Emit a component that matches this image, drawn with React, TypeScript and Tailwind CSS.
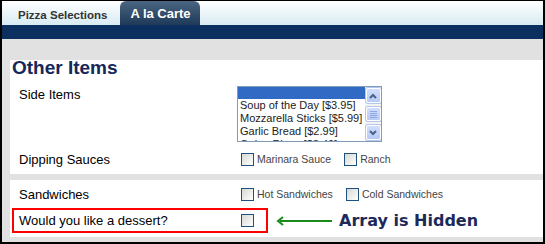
import React from "react"

const sides = ["Soup of the Day [$3.95]", "Mozzarella Sticks [$5.99]", "Garlic Bread [$2.99]", "Onion Rings [$3.49]"]

function Check() {
  return (
    <span className="inline-block w-[13px] h-[13px] shrink-0 border border-[#1c5180] bg-gradient-to-br from-[#d8d8d2] to-white" />
  )
}

function Option({ label, last }: { label: string; last?: boolean }) {
  return (
    <span className={`flex items-center gap-[3px] ml-[4px] ${last ? "" : "mr-[9px]"}`}>
      <Check />
      <span className="text-[10.5px] leading-[13px] text-[#444]">{label}</span>
    </span>
  )
}

function Chevron({ up }: { up?: boolean }) {
  return (
    <svg width="8" height="6" viewBox="0 0 8 6">
      <polyline
        points={up ? "1,5 4,2 7,5" : "1,1 4,4 7,1"}
        fill="none"
        stroke="#4d6185"
        strokeWidth="2"
      />
    </svg>
  )
}

function ScrollButton({ up }: { up?: boolean }) {
  return (
    <div className="w-[15px] h-[15px] rounded-[2px] border border-[#fff] ring-1 ring-[#b5c6ec] bg-gradient-to-b from-[#d2defd] to-[#b6cbf7] flex items-center justify-center">
      <Chevron up={up} />
    </div>
  )
}

export default function App() {
  return (
    <div className="w-[545px] h-[244px] box-border overflow-hidden border-t border-l-2 border-r-2 border-b-2 border-black bg-[#e1e1e1] font-['Liberation_Sans',Arial,sans-serif]">
      {/* tabs */}
      <div className="h-[24px] bg-gradient-to-b from-white to-[#d8ebf2] flex items-end">
        <div className="pl-[16px] pb-[3px] text-[11.5px] leading-[13px] font-bold text-[#333]">Pizza Selections</div>
        <div className="ml-[13px] w-[80px] h-[24px] rounded-t-[6px] bg-gradient-to-b from-[#4a6682] to-[#1e3a58] text-white text-[13px] leading-[15px] font-bold text-center pt-[5px]">
          A la Carte
        </div>
      </div>
      <div className="h-[14px] bg-[#0b2f5f]" />
      <div className="h-[21px]" />

      {/* other items */}
      <div className="ml-[8px] h-[114px] bg-white">
        <h1 className="pl-[2px] text-[19px] leading-[16px] font-bold text-[#16285a]">Other Items</h1>
        <div className="mt-[10px] flex items-start pl-[9px]">
          <div className="w-[218px] text-[13px] leading-[15px] text-black pt-[1px]">Side Items</div>
          <div className="w-[145px] h-[56px] border border-[#7f9db9] flex overflow-hidden">
            <div className="flex-1 pl-[2px] text-[11px] leading-[13px] text-[#222] overflow-hidden">
              <div className="h-[12px] -ml-[2px] bg-[#316ac5]" />
              {sides.map((s) => (
                <div key={s} className="whitespace-nowrap">{s}</div>
              ))}
            </div>
            <div className="w-[16px] bg-[#f3f3ef] flex flex-col items-center justify-between py-[1px]">
              <ScrollButton up />
              <div className="w-[15px] h-[14px] rounded-[2px] border border-white ring-1 ring-[#b5c6ec] bg-gradient-to-b from-[#d2defd] to-[#b6cbf7] flex flex-col items-center justify-center gap-[1px]">
                <span className="block w-[7px] h-px bg-[#8fa8e0]" />
                <span className="block w-[7px] h-px bg-[#8fa8e0]" />
                <span className="block w-[7px] h-px bg-[#8fa8e0]" />
                <span className="block w-[7px] h-px bg-[#8fa8e0]" />
              </div>
              <ScrollButton />
            </div>
          </div>
        </div>
        <div className="mt-[6px] h-[22px] flex items-center pl-[9px]">
          <div className="w-[218px] text-[13px] leading-[15px] text-black">Dipping Sauces</div>
          <Option label="Marinara Sauce" />
          <Option label="Ranch" last />
        </div>
      </div>

      <div className="h-[6px]" />

      {/* sandwiches */}
      <div className="ml-[8px] h-[57px] bg-white pt-[4px]">
        <div className="h-[21px] flex items-center pl-[9px]">
          <div className="w-[218px] text-[13px] leading-[15px] text-black">Sandwiches</div>
          <Option label="Hot Sandwiches" />
          <Option label="Cold Sandwiches" last />
        </div>
        <div className="mt-[3px] flex items-center">
          <div className="ml-[2px] w-[256px] h-[25px] border-2 border-[#ff0000] flex items-center pl-[5px]">
            <div className="w-[222px] text-[13px] leading-[15px] text-black">Would you like a dessert?</div>
            <Check />
          </div>
          <svg className="ml-[8px]" width="57" height="10" viewBox="0 0 57 10">
            <line x1="4" y1="5" x2="56" y2="5" stroke="#1b8a1b" strokeWidth="2" />
            <polyline points="7,1 2,5 7,9" fill="none" stroke="#1b8a1b" strokeWidth="2" />
          </svg>
          <span className="ml-[6px] font-['DejaVu_Sans',sans-serif] font-bold text-[16px] leading-[18px] text-[#1c2a5a]">
            Array is Hidden
          </span>
        </div>
      </div>
    </div>
  )
}
